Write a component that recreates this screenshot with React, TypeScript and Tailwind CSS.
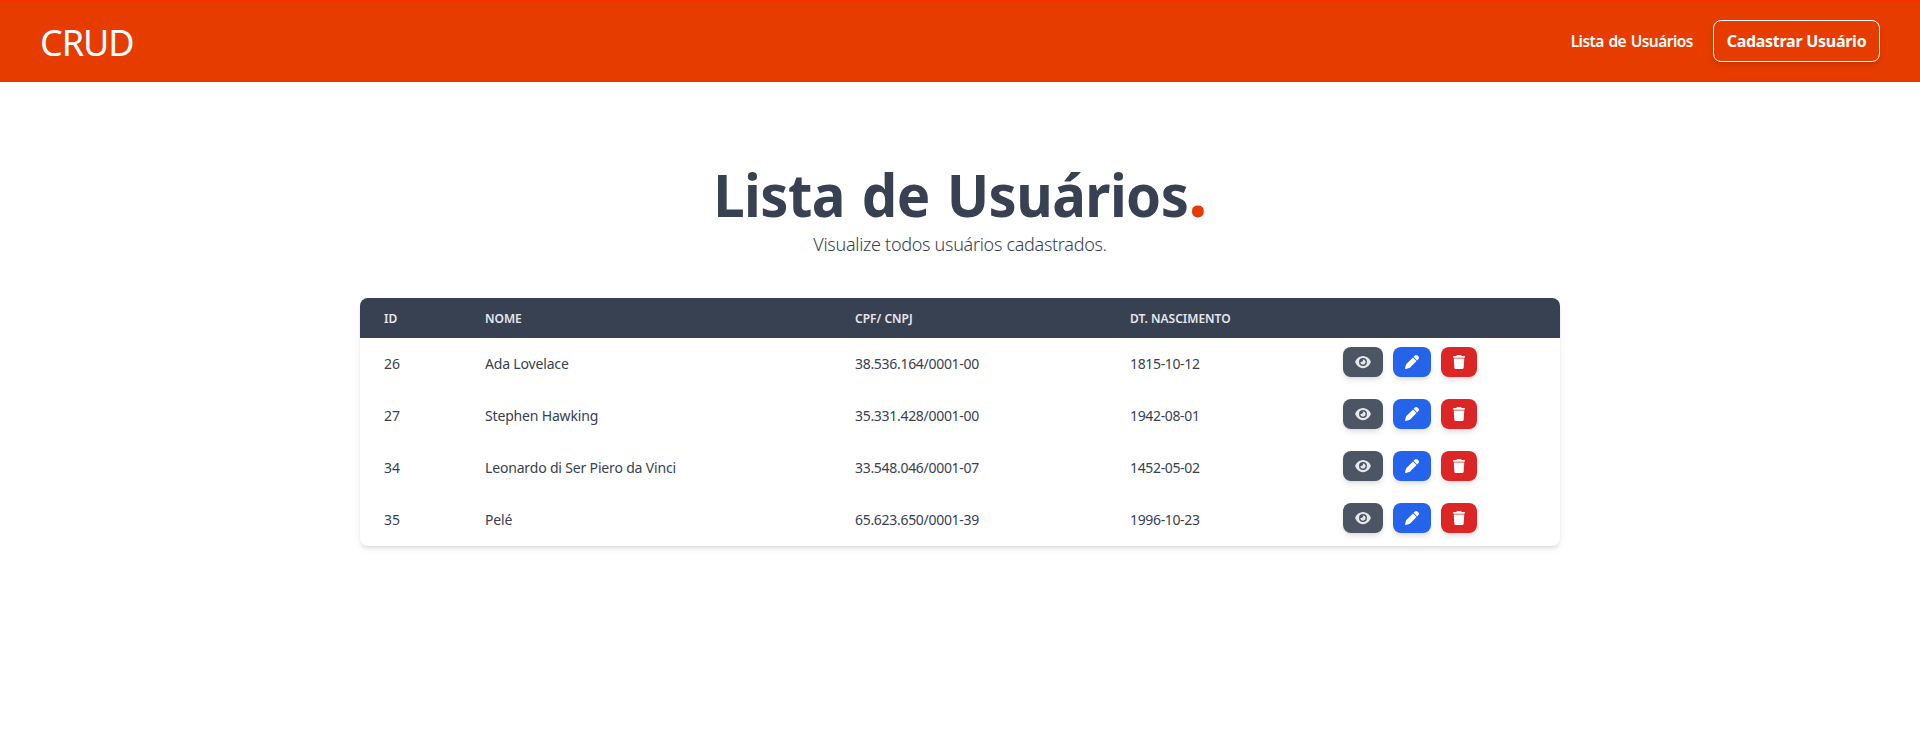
import { FaEye, FaPen, FaTrash } from "react-icons/fa6";

const users = [
  { id: 26, name: "Ada Lovelace", doc: "38.536.164/0001-00", birth: "1815-10-12" },
  { id: 27, name: "Stephen Hawking", doc: "35.331.428/0001-00", birth: "1942-08-01" },
  { id: 34, name: "Leonardo di Ser Piero da Vinci", doc: "33.548.046/0001-07", birth: "1452-05-02" },
  { id: 35, name: "Pelé", doc: "65.623.650/0001-39", birth: "1996-10-23" },
];

const actionClass = "flex h-[30px] items-center justify-center rounded-lg shadow-md text-[14px]";

function Header() {
  return (
    <header className="flex h-[82px] items-center justify-between border-t border-[#f52f00] bg-[#e63c00] px-10 text-white">
      <a className="pt-[3px] text-[36px] leading-10 tracking-[-1.05px]">CRUD</a>
      <nav className="mb-px flex items-center gap-5">
        <a className="pt-px text-[15.5px] font-semibold tracking-[-0.52px] [word-spacing:1px]">Lista de Usuários</a>
        <button className="h-[42px] w-[167px] rounded-lg border border-white text-[16px] font-bold tracking-[-0.27px] whitespace-nowrap shadow-md">
          Cadastrar Usuário
        </button>
      </nav>
    </header>
  );
}

function UserTable() {
  return (
    <table className="w-[1200px] table-fixed overflow-hidden rounded-lg bg-white text-left text-[14px] text-[#374151] shadow-md">
      <colgroup>
        <col className="w-[101px]" />
        <col className="w-[370px]" />
        <col className="w-[275px]" />
        <col className="w-[213px]" />
        <col className="w-[241px]" />
      </colgroup>
      <thead className="bg-[#384152] text-[12px] text-gray-200 uppercase">
        <tr className="h-10">
          <th className="pt-[2px] pl-6 font-semibold">ID</th>
          <th className="pt-[2px] pl-6 font-semibold">Nome</th>
          <th className="pt-[2px] pl-6 font-semibold">CPF/ CNPJ</th>
          <th className="pt-[2px] pl-6 font-semibold">Dt. Nascimento</th>
          <th />
        </tr>
      </thead>
      <tbody>
        {users.map((user) => (
          <tr key={user.id} className="h-[52px]">
            <td className="pb-[2px] pl-6">{user.id}</td>
            <td className="pb-[2px] pl-6 tracking-[-0.17px]">{user.name}</td>
            <td className="pb-[2px] pl-6 tracking-[-0.3px]">{user.doc}</td>
            <td className="pb-[2px] pl-6 tracking-[-0.35px]">{user.birth}</td>
            <td className="pb-1 pl-6">
              <div className="flex gap-[10px]">
                <button aria-label="Visualizar" className={`${actionClass} w-10 bg-[#4b5563] text-[#e5e7eb]`}>
                  <FaEye className="h-[14px] w-4" />
                </button>
                <button aria-label="Editar" className={`${actionClass} w-[38px] bg-[#2563eb] text-white`}>
                  <FaPen />
                </button>
                <button aria-label="Excluir" className={`${actionClass} w-9 bg-[#dc2626] text-white`}>
                  <FaTrash />
                </button>
              </div>
            </td>
          </tr>
        ))}
      </tbody>
    </table>
  );
}

export default function App() {
  return (
    <div className="min-h-[756px] bg-white font-['Noto_Sans','Open_Sans',sans-serif]">
      <Header />
      <main className="flex flex-col items-center pt-[82px]">
        <h1 className="h-[60px] origin-center scale-x-[0.953] text-[59px] leading-[60px] font-bold tracking-[-0.6px] whitespace-nowrap text-[#384152] [word-spacing:3px]">
          Lista de Usuários<span className="text-[72px] leading-[0] text-[#e63c00]">.</span>
        </h1>
        <p className="mt-[6px] mb-[40px] text-[18px] leading-7 font-light tracking-[-0.3px] text-[#374151]">
          Visualize todos usuários cadastrados.
        </p>
        <UserTable />
      </main>
    </div>
  );
}
